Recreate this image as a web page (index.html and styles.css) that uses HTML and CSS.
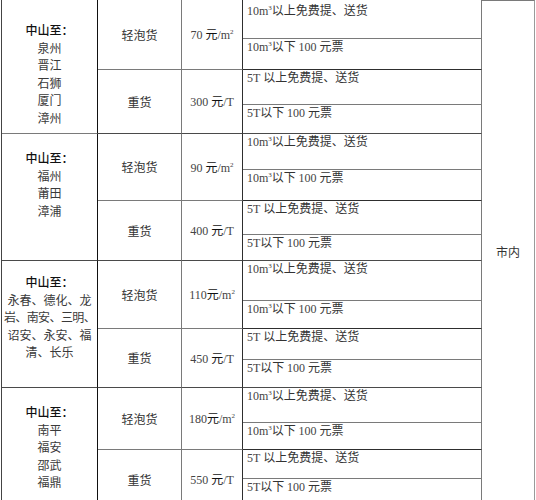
FILE: index.html
```html
<!DOCTYPE html>
<html lang="zh-CN">
<head>
<meta charset="utf-8">
<title>价格表</title>
<link rel="stylesheet" href="styles.css">
</head>
<body>
<div class="sheet">
  <!-- group 1 -->
  <div class="cell c1 g p1"><b class="head">中山至：</b><br>泉州<br>晋江<br>石狮<br>厦门<br>漳州</div>
  <div class="cell c2 t">轻泡货</div>
  <div class="cell c3 t"><span class="price"><span class="num">70 </span>元<span class="num">/m<sup>2</sup></span></span></div>
  <div class="cell c4 first"><span class="num">10m<sup>3</sup></span>以上免费提、送货</div>
  <div class="cell c5">市内</div>
  <div class="cell c4 tb"><span class="num">10m<sup>3</sup></span>以下 <span class="num">100 </span>元票</div>
  <div class="cell c2 t gb">重货</div>
  <div class="cell c3 t gb"><span class="price"><span class="num">300 </span>元<span class="num">/T</span></span></div>
  <div class="cell c4"><span class="num">5T</span><span class="gap"></span>以上免费提、送货</div>
  <div class="cell c4 gb"><span class="num">5T</span>以下 <span class="num">100 </span>元票</div>

  <!-- group 2 -->
  <div class="cell c1 g gb p2"><b class="head">中山至：</b><br>福州<br>莆田<br>漳浦</div>
  <div class="cell c2 t">轻泡货</div>
  <div class="cell c3 t"><span class="price"><span class="num">90 </span>元<span class="num">/m<sup>2</sup></span></span></div>
  <div class="cell c4"><span class="num">10m<sup>3</sup></span>以上免费提、送货</div>
  <div class="cell c4 tb"><span class="num">10m<sup>3</sup></span>以下 <span class="num">100 </span>元票</div>
  <div class="cell c2 t gb">重货</div>
  <div class="cell c3 t gb"><span class="price"><span class="num">400 </span>元<span class="num">/T</span></span></div>
  <div class="cell c4"><span class="num">5T</span><span class="gap"></span>以上免费提、送货</div>
  <div class="cell c4 gb"><span class="num">5T</span>以下 <span class="num">100 </span>元票</div>

  <!-- group 3 -->
  <div class="cell c1 g gb p3"><b class="head">中山至：</b><br>永春、德化、龙<br><span class="tight">岩、南安、三明、</span><br>诏安、永安、福<br>清、长乐</div>
  <div class="cell c2 t">轻泡货</div>
  <div class="cell c3 t"><span class="price"><span class="num">110</span>元<span class="num">/m<sup>2</sup></span></span></div>
  <div class="cell c4"><span class="num">10m<sup>3</sup></span>以上免费提、送货</div>
  <div class="cell c4 tb"><span class="num">10m<sup>3</sup></span>以下 <span class="num">100 </span>元票</div>
  <div class="cell c2 t gb">重货</div>
  <div class="cell c3 t gb"><span class="price"><span class="num">450 </span>元<span class="num">/T</span></span></div>
  <div class="cell c4"><span class="num">5T</span><span class="gap"></span>以上免费提、送货</div>
  <div class="cell c4 gb"><span class="num">5T</span>以下 <span class="num">100 </span>元票</div>

  <!-- group 4 -->
  <div class="cell c1 g gb p4"><b class="head">中山至：</b><br>南平<br>福安<br>邵武<br>福鼎</div>
  <div class="cell c2 t">轻泡货</div>
  <div class="cell c3 t"><span class="price"><span class="num">180</span>元<span class="num">/m<sup>2</sup></span></span></div>
  <div class="cell c4"><span class="num">10m<sup>3</sup></span>以上免费提、送货</div>
  <div class="cell c4 tb"><span class="num">10m<sup>3</sup></span>以下 <span class="num">100 </span>元票</div>
  <div class="cell c2 t gb">重货</div>
  <div class="cell c3 t gb"><span class="price"><span class="num">550 </span>元<span class="num">/T</span></span></div>
  <div class="cell c4"><span class="num">5T</span><span class="gap"></span>以上免费提、送货</div>
  <div class="cell c4"><span class="num">5T</span>以下 <span class="num">100 </span>元票</div>
</div>
</body>
</html>
```
FILE: styles.css
```css
html, body {
  margin: 0;
  padding: 0;
  background: #ffffff;
}

body {
  font-family: "Noto Sans CJK SC", "Liberation Serif", sans-serif;
  font-size: 12px;
  color: #2a2a2a;
  overflow: hidden;
}

.sheet {
  display: grid;
  margin-left: 1px;
  width: 533px;
  border-left: 1px solid #444;
  grid-template-columns: 96px 84px 61px 239px 53px;
  grid-template-rows: 39px 31px 35px 29px 36px 31px 34px 26px 40px 28px 31px 28px 35px 27px 29px 31px;
}

.cell {
  box-sizing: border-box;
  border-right: 1px solid #7a7a7a;
  border-bottom: 1px solid #7a7a7a;
  line-height: 14px;
}

.c1 {
  grid-column: 1;
  grid-row: span 4;
  border-right-color: #111;
  text-align: center;
  line-height: 17.6px;
  color: #3a3a3a;
}

.c2 {
  grid-column: 2;
  display: flex;
  align-items: center;
  justify-content: center;
  color: #333;
}

.c3 {
  grid-column: 3;
  display: flex;
  align-items: center;
  justify-content: center;
  border-right-color: #2e2e2e;
  color: #111;
}

.price {
  white-space: nowrap;
}

.c4 {
  grid-column: 4;
  padding-left: 4px;
  color: #333;
  white-space: nowrap;
}

.c5 {
  grid-column: 5;
  grid-row: 1 / span 16;
  border-top: 1px solid #7a7a7a;
  border-right-color: #9a9a9a;
  border-bottom: none;
  display: flex;
  align-items: center;
  justify-content: center;
  padding-bottom: 8px;
  color: #333;
}

.t {
  grid-row: span 2;
}

.g {
  grid-row: span 4;
}

.gb {
  border-bottom-color: #4a4a4a;
}

.tb {
  border-bottom-color: #2e2e2e;
}

.first {
  padding-top: 3px;
}

.p1 { padding-top: 21px; }
.p2 { padding-top: 15px; }
.p3 { padding-top: 12px; }
.p4 { padding-top: 15px; }

.head {
  font-weight: 500;
  color: #111;
}

.tight {
  letter-spacing: -0.6px;
}

.gap {
  display: inline-block;
  width: 3px;
}

.num {
  font-family: "Liberation Serif", serif;
  font-size: 12px;
  color: #444;
}

sup {
  font-size: 7px;
  line-height: 0;
  vertical-align: 5px;
}
```
